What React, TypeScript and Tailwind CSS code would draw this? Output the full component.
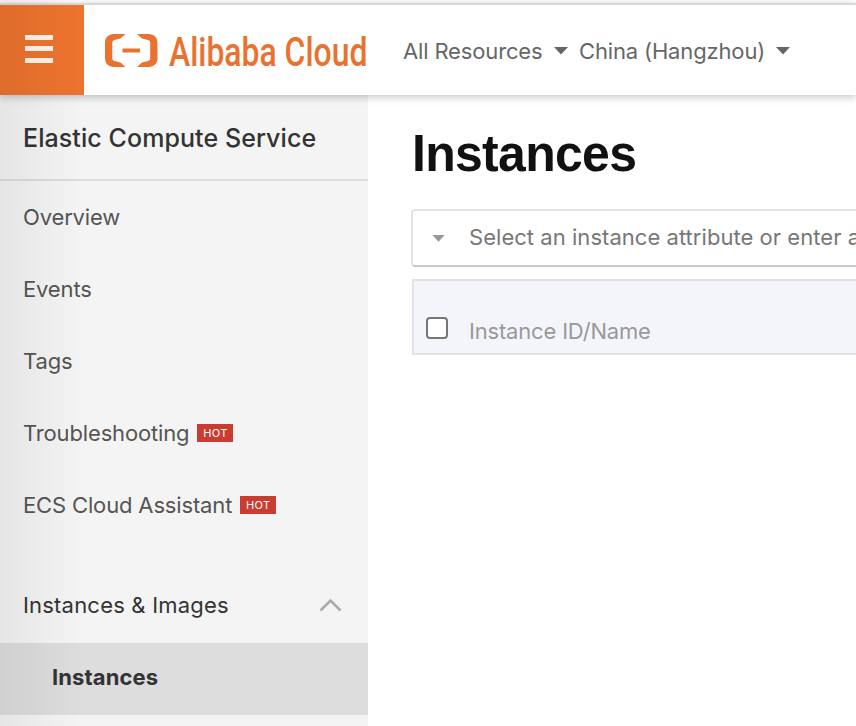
import React from "react";

function Caret({ className }: { className: string }) {
  return (
    <svg viewBox="0 0 14 8" className={className} fill="currentColor">
      <path d="M0 0H14L7 7.6Z" />
    </svg>
  );
}

function Logo() {
  return (
    <div className="ml-5 flex w-[264px] shrink-0 items-center text-[#e9722f]">
      <svg width="65" height="40" viewBox="0 0 65 40" fill="currentColor" className="block shrink-0">
        <path d="M21.500 4H10C4.500 4 1 7.500 1 13V28C1 33.500 4.500 37 10 37H21.500L16.500 32.500L10.500 31C9 30.600 8.300 29.800 8.300 28.300V12.700C8.300 11.200 9 10.400 10.500 10L16.500 8.500Z" />
        <path d="M33 4H44.500C50 4 53.500 7.500 53.500 13V28C53.500 33.500 50 37 44.500 37H33L38 32.500L44 31C45.500 30.600 46.200 29.800 46.200 28.300V12.700C46.200 11.200 45.500 10.400 44 10L38 8.500Z" />
        <path d="M18.500 18.500H36V22.500H18.500Z" />
      </svg>
      <span className="w-[198px] shrink-0 pt-[3px]">
        <span className="inline-block origin-left scale-x-[0.778] font-['Roboto',sans-serif] text-[41px] leading-[44px] font-medium whitespace-nowrap">
          Alibaba Cloud
        </span>
      </span>
    </div>
  );
}

function Header() {
  return (
    <header className="relative z-10 flex h-[92px] shrink-0 items-center border-t-2 border-[#d8d8d8] bg-white shadow-[0_2px_8px_rgba(0,0,0,0.24)]">
      <button className="flex h-[90px] w-[84px] shrink-0 flex-col items-start justify-center gap-[6.5px] bg-[#ed732e] pl-[25px] pb-[3px]">
        <span className="h-[5px] w-7 bg-[#fff3ea]" />
        <span className="h-[5px] w-7 bg-[#fff3ea]" />
        <span className="h-[5px] w-7 bg-[#fff3ea]" />
      </button>
      <Logo />
      <nav className="flex items-center whitespace-nowrap pl-[35px] pt-[2px] text-[22px] text-[#666]">
        <span className="w-[151px] tracking-[-0.15px]">All Resources</span>
        <Caret className="h-2 w-[14px]" />
        <span className="ml-[11px] w-[197px] tracking-[-0.15px]">China (Hangzhou)</span>
        <Caret className="h-2 w-[14px]" />
      </nav>
    </header>
  );
}

function HotBadge() {
  return (
    <span className="ml-2 flex h-[18px] w-9 items-center justify-center bg-[#c93c32] pt-px text-[11px] tracking-[0.3px] text-white">
      HOT
    </span>
  );
}

function NavItem({ label, hot = false }: { label: string; hot?: boolean }) {
  return (
    <li className="flex h-[72px] items-center pl-[23px] text-[22px] tracking-[-0.15px] text-[#555]">
      {label}
      {hot && <HotBadge />}
    </li>
  );
}

function Sidebar() {
  return (
    <aside className="w-[368px] shrink-0 bg-[#f4f4f4]">
      <h2 className="flex h-[86px] items-center border-b-2 border-[#dcdcdc] pl-[23px] pt-[4px] text-[25px] font-medium tracking-[0.08px] text-[#333]">
        Elastic Compute Service
      </h2>
      <ul>
        <NavItem label="Overview" />
        <NavItem label="Events" />
        <NavItem label="Tags" />
        <NavItem label="Troubleshooting" hot />
        <NavItem label="ECS Cloud Assistant" hot />
      </ul>
      <div className="mt-7 flex h-[74px] items-center justify-between pb-[2px] pl-[23px] pr-[26px] text-[22px] text-[#333]">
        <span className="tracking-[0.2px]">Instances &amp; Images</span>
        <svg width="23" height="14" viewBox="0 0 23 14" fill="none" stroke="#aaa" strokeWidth="2.600">
          <path d="M1.500 12.500L11.500 2.500L21.500 12.500" />
        </svg>
      </div>
      <div className="flex h-[72px] items-center bg-[#ddd] pb-[3px] pl-[52px] text-[22px] font-bold tracking-[0.1px] text-[#333]">
        Instances
      </div>
    </aside>
  );
}

function Content() {
  return (
    <main className="min-w-0 flex-1 overflow-hidden bg-white pl-[43px] pt-[26px]">
      <h1 className="ml-px h-[88px] origin-left scale-x-[0.96] font-['Liberation_Sans',sans-serif] text-[52px] leading-[64px] font-bold tracking-[-0.7px] text-[#111]">
        Instances
      </h1>
      <div className="flex h-[58px] w-[600px] items-center rounded-[4px] border-2 border-[#e3e3e3] border-b-[#c9c9c9] bg-white pl-[19px] whitespace-nowrap">
        <Caret className="h-[7px] w-[13px] text-[#999]" />
        <span className="ml-[24px] pb-[2px] text-[22px] tracking-[0.04px] text-[#777]">
          Select an instance attribute or enter a
        </span>
      </div>
      <div className="mt-3 ml-px flex h-[76px] w-[600px] items-end border-2 border-[#e1e2e6] bg-[#f4f5fa] pb-[7px] pl-3">
        <span className="mb-[7px] h-[22px] w-[22px] rounded-[4px] border-2 border-[#767676] bg-white" />
        <span className="mb-px ml-[21px] text-[22px] leading-[28px] tracking-[-0.18px] text-[#999]">Instance ID/Name</span>
      </div>
    </main>
  );
}

export default function App() {
  return (
    <div className="relative flex h-[726px] w-[856px] flex-col overflow-hidden bg-white pt-[3px] font-['Inter',sans-serif]">
      <Header />
      <div className="flex min-h-0 flex-1">
        <Sidebar />
        <Content />
      </div>
      <div className="pointer-events-none absolute inset-y-0 left-0 z-20 w-[84px] bg-linear-to-r from-black/6 to-transparent" />
    </div>
  );
}
